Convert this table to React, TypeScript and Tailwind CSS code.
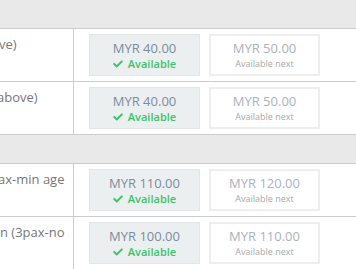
import { FaCheck } from "react-icons/fa";

type Row = {
  label: string;
  shift: string;
  now: string;
  next: string;
};

const ROWS_A: Row[] = [
  { label: "ve)", shift: "-ml-[1px]", now: "MYR 40.00", next: "MYR 50.00" },
  { label: "above)", shift: "-ml-[3px]", now: "MYR 40.00", next: "MYR 50.00" },
];

const ROWS_B: Row[] = [
  { label: "ax-min age", shift: "-ml-[2px]", now: "MYR 110.00", next: "MYR 120.00" },
  { label: "n (3pax-no", shift: "ml-0", now: "MYR 100.00", next: "MYR 110.00" },
];

function PriceRow({ row }: { row: Row }) {
  return (
    <div className="flex h-[53px] border-b border-[#cccccc]">
      {/* Room name, cut by horizontal scroll */}
      <div className="w-[74px] shrink-0 overflow-hidden border-r border-[#cccccc] pt-[5px]">
        <div
          className={`${row.shift} whitespace-nowrap text-[13px] leading-[20px] text-[#777777]`}
        >
          {row.label}
        </div>
      </div>

      <div className="flex gap-[9px] pl-[15px] pt-[5px]">
        <div className="flex h-[42px] w-[111px] flex-col items-center justify-center border border-[#e2e6e6] bg-[#ecefef]">
          <div className="text-[13px] leading-[16px] text-[#7b8ca2]">{row.now}</div>
          <div className="mt-[1px] flex items-center gap-[5px] text-[11px] font-semibold leading-[14px] text-[#3cc46b]">
            <FaCheck className="h-[10px] w-[10px]" />
            <span>Available</span>
          </div>
        </div>

        <div className="flex h-[42px] w-[111px] flex-col items-center justify-center border-2 border-[#eeeeee] bg-white">
          <div className="text-[13px] leading-[16px] text-[#aab2bd]">{row.next}</div>
          <div className="mt-[1px] text-[9px] leading-[14px] text-[#a8a8a8]">Available next</div>
        </div>
      </div>
    </div>
  );
}

export default function App() {
  return (
    <div className="h-[269px] w-[356px] overflow-hidden bg-white font-['Open_Sans',sans-serif]">
      <div className="h-[29px] border-b border-[#cccccc] bg-[#e9e9e9]" />
      {ROWS_A.map((row) => (
        <PriceRow key={row.label} row={row} />
      ))}
      <div className="h-[29px] border-b border-[#cccccc] bg-[#e9e9e9]" />
      {ROWS_B.map((row) => (
        <PriceRow key={row.label} row={row} />
      ))}
    </div>
  );
}
